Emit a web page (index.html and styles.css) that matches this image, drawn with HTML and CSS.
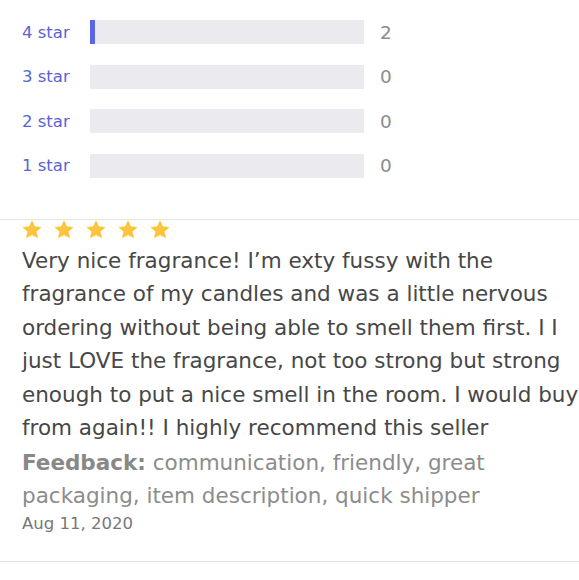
FILE: index.html
```html
<!DOCTYPE html>
<html lang="en">
<head>
<meta charset="utf-8">
<title>Reviews</title>
<link rel="stylesheet" href="styles.css">
</head>
<body>
<section class="histogram">
  <div class="row">
    <span class="label">4 star</span>
    <div class="bar"><div class="fill" style="width: 2%"></div></div>
    <span class="count">2</span>
  </div>
  <div class="row">
    <span class="label">3 star</span>
    <div class="bar"></div>
    <span class="count">0</span>
  </div>
  <div class="row">
    <span class="label">2 star</span>
    <div class="bar"></div>
    <span class="count">0</span>
  </div>
  <div class="row">
    <span class="label">1 star</span>
    <div class="bar"></div>
    <span class="count">0</span>
  </div>
</section>
<article class="review">
  <div class="stars">
    <svg class="star" viewBox="1 1.5 22 20.5"><path d="M12 1.5l3.1 6.9 7.4.7-5.6 5 1.7 7.4L12 17.7l-6.6 3.8 1.7-7.4-5.6-5 7.4-.7z"/></svg>
    <svg class="star" viewBox="1 1.5 22 20.5"><path d="M12 1.5l3.1 6.9 7.4.7-5.6 5 1.7 7.4L12 17.7l-6.6 3.8 1.7-7.4-5.6-5 7.4-.7z"/></svg>
    <svg class="star" viewBox="1 1.5 22 20.5"><path d="M12 1.5l3.1 6.9 7.4.7-5.6 5 1.7 7.4L12 17.7l-6.6 3.8 1.7-7.4-5.6-5 7.4-.7z"/></svg>
    <svg class="star" viewBox="1 1.5 22 20.5"><path d="M12 1.5l3.1 6.9 7.4.7-5.6 5 1.7 7.4L12 17.7l-6.6 3.8 1.7-7.4-5.6-5 7.4-.7z"/></svg>
    <svg class="star" viewBox="1 1.5 22 20.5"><path d="M12 1.5l3.1 6.9 7.4.7-5.6 5 1.7 7.4L12 17.7l-6.6 3.8 1.7-7.4-5.6-5 7.4-.7z"/></svg>
  </div>
  <p class="text">Very nice fragrance! I’m exty fussy with the<br>fragrance of my candles and was a little nervous<br>ordering without being able to smell them first. I I<br>just LOVE the fragrance, not too strong but strong<br>enough to put a nice smell in the room. I would buy<br>from again!! I highly recommend this seller</p>
  <p class="feedback"><strong>Feedback:</strong> communication, friendly, great<br>packaging, item description, quick shipper</p>
  <p class="date">Aug 11, 2020</p>
</article>
</body>
</html>
```
FILE: styles.css
```css
html, body {
  margin: 0;
  padding: 0;
  background: #ffffff;
  overflow: hidden;
}
body {
  width: 579px;
  font-family: "DejaVu Sans", "Noto Sans", sans-serif;
}
.histogram {
  display: flex;
  flex-direction: column;
  gap: 20.5px;
  padding: 20px 0 0 22px;
}
.row {
  display: flex;
  align-items: center;
  height: 24px;
}
.label {
  width: 68px;
  font-size: 16.5px;
  color: #5a63d4;
}
.bar {
  width: 274px;
  height: 24px;
  background: #ebebef;
}
.fill {
  height: 100%;
  background: #5a67e0;
}
.count {
  margin-left: 16px;
  font-size: 18.5px;
  color: #8c8c8c;
}
.review {
  margin-top: 41px;
  border-top: 1px solid #e6e6e6;
  border-bottom: 1px solid #e0e0e0;
  padding: 0 0 26px 22px;
}
.stars {
  display: flex;
  gap: 12px;
  height: 19px;
}
.star {
  width: 20px;
  height: 19px;
  fill: #fcc43a;
}
.text {
  width: 700px;
  margin: 5px 0 0;
  font-size: 21.5px;
  line-height: 33.5px;
  color: #474747;
  white-space: nowrap;
}
.feedback {
  margin: 1px 0 0;
  font-size: 21.5px;
  line-height: 33.5px;
  color: #8c8c8c;
  white-space: nowrap;
}
.feedback strong {
  font-weight: 700;
  color: #888888;
}
.date {
  margin: 0;
  font-size: 16.5px;
  line-height: 22px;
  color: #777777;
}
```
